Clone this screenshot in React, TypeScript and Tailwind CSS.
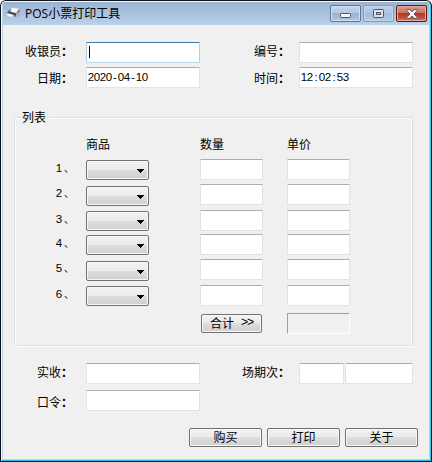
import type { ReactNode } from "react";

const ROWS = [
  { no: 1, height: "h-[25px]", drop: "mt-px" },
  { no: 2, height: "h-[26px]", drop: "mt-0.5" },
  { no: 3, height: "h-[24px]", drop: "mt-px" },
  { no: 4, height: "h-[25px]", drop: "mt-px" },
  { no: 5, height: "h-[26px]", drop: "mt-0.5" },
  { no: 6, height: "h-[28px]", drop: "mt-px" },
];

// half-width characters sit in 6px cells
function HalfWidth({ text }: { text: string }) {
  return (
    <span className="inline-flex font-['Liberation_Sans',sans-serif] text-[11.5px] leading-[12px]">
      {text.split("").map((ch, i) => (
        <span key={i} className="flex w-1.5 justify-center">
          {ch}
        </span>
      ))}
    </span>
  );
}

function Field({ width, value = "", focused = false }: { width: string; value?: string; focused?: boolean }) {
  const border = focused
    ? "border-[#b5cfe7] border-t-[#3d7bad] border-b-[#b7d9ed]"
    : "border-[#e2e3ea] border-t-[#abadb3]";
  return (
    <div className={`flex h-[21px] shrink-0 items-start rounded-[1px] border bg-white pl-px pt-[3px] ${border} ${width}`}>
      {focused && <div className="ml-px h-3 w-px bg-black" />}
      {value && <HalfWidth text={value} />}
    </div>
  );
}

function Button({ width, children }: { width: string; children: ReactNode }) {
  return (
    <button
      className={`flex h-[19px] shrink-0 items-start justify-center whitespace-pre rounded-[2px] border border-[#707070] bg-[linear-gradient(#f2f2f2_0%,#ebebeb_49%,#dddddd_50%,#cfcfcf_100%)] pt-0.5 text-[12px] leading-[12px] shadow-[inset_0_0_0_1px_#f8f8f8] ${width}`}
    >
      {children}
    </button>
  );
}

function Combo() {
  return (
    <button className="flex h-5 w-[63px] items-start justify-end rounded-[2px] border border-[#707070] bg-[linear-gradient(#f2f2f2_0%,#ebebeb_49%,#dddddd_50%,#cfcfcf_100%)] pr-1 pt-2 shadow-[inset_0_0_0_1px_#f8f8f8]">
      <svg width="7" height="4" viewBox="0 0 7 4" shapeRendering="crispEdges">
        <path d="M0 0h7v1H0zM1 1h5v1H1zM2 2h3v1H2zM3 3h1v1H3z" />
      </svg>
    </button>
  );
}

function Label({ width, children }: { width: string; children: ReactNode }) {
  return (
    <div className={`shrink-0 whitespace-nowrap pt-[3px] leading-[12px] ${width}`}>
      {children}
      <span className="font-bold">：</span>
    </div>
  );
}

function TitleBar() {
  return (
    <div className="flex h-[23px] shrink-0 bg-[linear-gradient(#9ab3d0,#b9d1ea)]">
      <svg className="ml-[2px] mt-[4px] shrink-0" width="16" height="14" viewBox="0 0 16 14">
        <path d="M6.5 1.5 14 2.2 11.5 7 5 6z" fill="#f4f7fb" stroke="#a9b2bf" strokeWidth=".5" />
        <path d="M3 4.5 6 3l-.5 3.5 6 .8L13 4l2 .5v4L11 11 1.5 8z" fill="#77828e" />
        <path d="m3.5 5.5 7.5 2-.5 2L3 7.5z" fill="#343b43" />
        <path d="m11 8 4-2.5v3L11 11z" fill="#aeb7c1" />
        <path d="m0 8.5 3-1.3L9 9l-3 2.5z" fill="#f5f5f5" stroke="#989da5" strokeWidth=".4" />
      </svg>
      <div className="ml-1 mt-1 grow whitespace-nowrap font-['Open_Sans','Noto_Sans_CJK_SC',sans-serif] text-[12px] leading-[16px]">
        POS小票打印工具
      </div>
      <div className="mr-0.5 mt-[3px] flex h-[17px] gap-0.5">
        <button className="flex w-[31px] items-center justify-center rounded-[2px] border border-[#60758f] bg-[linear-gradient(#c3d4e8_0%,#b4c9e2_46%,#98b2d0_47%,#afc8e4_100%)] shadow-[inset_0_0_0_1px_#d4e1f1]">
          <svg width="11" height="5" viewBox="0 0 11 5" className="mt-1">
            <rect x=".5" y=".5" width="10" height="4" rx=".8" fill="#f5f5f5" stroke="#535666" />
          </svg>
        </button>
        <button className="flex w-[31px] items-center justify-center rounded-[2px] border border-[#829bb9] bg-[linear-gradient(#b9cee6_0%,#afc6e0_46%,#a3bdda_47%,#b3cbe6_100%)] shadow-[inset_0_0_0_1px_#c4d6eb]">
          <svg width="11" height="9" viewBox="0 0 11 9">
            <rect x=".5" y=".5" width="10" height="8" rx=".8" fill="#dce2ea" stroke="#535666" />
            <rect x="3.5" y="3.5" width="4" height="2" fill="#a9bfd9" stroke="#535666" />
          </svg>
        </button>
        <button className="flex w-[31px] items-center justify-center rounded-[2px] border border-[#54191a] bg-[linear-gradient(#dc9b90_0%,#cc7163_46%,#b33522_47%,#c75040_80%,#d7796a_100%)] shadow-[inset_0_0_0_1px_#e4a99f]">
          <svg width="12" height="10" viewBox="0 0 12 10">
            <path
              d="M.7.6h3.1L6 2.9 8.2.6h3.1v.8L8.1 5l3.2 3.6v.8H8.2L6 7.1 3.8 9.4H.7v-.8L3.9 5 .7 1.4z"
              fill="#f7f7f7"
              stroke="#535666"
              strokeWidth="1"
            />
          </svg>
        </button>
      </div>
    </div>
  );
}

export default function App() {
  return (
    <div className="h-[462px] w-[432px] rounded-t-[6px] bg-[#101317] p-px font-['Noto_Sans_CJK_SC',sans-serif] text-[12px] text-black">
      <div className="h-full rounded-t-[5px] border border-b-[#1fc4e8] border-l-[#f3f8fd] border-r-[#35c9ef] border-t-[#f3f8fd] bg-[#b9d1ea]">
        <div className="flex h-full flex-col overflow-hidden rounded-t-[4px] border-x border-b border-[#b9d1ea]">
          <TitleBar />

          <div className="flex grow flex-col bg-[#f0f0f0] pt-[17px]">
            <div className="flex pl-[22px]">
              <Label width="w-[61px]">收银员</Label>
              <Field width="w-[114px]" focused />
              <div className="w-[54px]" />
              <Label width="w-[45px]">编号</Label>
              <Field width="w-[114px]" />
            </div>
            <div className="mt-1 flex pl-[34px]">
              <Label width="w-[49px] mt-0.5">日期</Label>
              <Field width="w-[114px]" value="2020-04-10" />
              <div className="w-[54px]" />
              <Label width="w-[45px] mt-0.5">时间</Label>
              <Field width="w-[114px]" value="12:02:53" />
            </div>

            <fieldset className="ml-[11px] mt-[23px] h-[236px] w-[399px]">
              <div className="flex h-3 items-center leading-[12px]">
                <div className="mt-1 h-1 w-[7px] rounded-tl-[2px] border-l border-t border-[#d5dfe5] shadow-[inset_1px_1px_0_white]" />
                <div className="w-7 pl-px">列表</div>
                <div className="mt-1 h-1 grow rounded-tr-[2px] border-r border-t border-[#d5dfe5] shadow-[inset_-1px_1px_0_white]" />
              </div>
              <div className="-mt-1 h-[227px] rounded-b-[2px] border-x border-b border-[#d5dfe5] pt-[19px] shadow-[inset_1px_0_0_white,inset_-1px_0_0_white,0_1px_0_white]">
                <div className="flex pl-[71px] leading-[12px]">
                  <div className="w-[114px]">商品</div>
                  <div className="w-[87px]">数量</div>
                  <div>单价</div>
                </div>
                <div className="mt-[9px]">
                  {ROWS.map((row) => (
                    <div key={row.no} className={`flex items-start pl-[41px] ${row.height}`}>
                      <div className="flex w-[30px] pt-[3px] leading-[12px]">
                        <HalfWidth text={String(row.no)} />
                        <span className="pl-0.5 text-[10px]">、</span>
                      </div>
                      <div className={`w-[114px] ${row.drop}`}>
                        <Combo />
                      </div>
                      <Field width="w-[63px]" />
                      <div className="w-6" />
                      <Field width="w-[63px]" />
                    </div>
                  ))}
                </div>
                <div className="flex pl-[186px]">
                  <div className="w-[86px] pt-px">
                    <Button width="w-[61px]">
                      合计
                      <span className="pl-[7px] font-['Liberation_Mono',monospace] tracking-[-1.2px]">{">>"}</span>
                    </Button>
                  </div>
                  <div className="h-[21px] w-[63px] border border-b-white border-l-[#a0a0a0] border-r-white border-t-[#a0a0a0]" />
                </div>
              </div>
            </fieldset>

            <div className="mt-4 flex pl-[34px]">
              <Label width="w-[49px]">实收</Label>
              <Field width="w-[114px]" />
              <div className="w-[42px]" />
              <Label width="w-[57px]">场期次</Label>
              <Field width="w-[45px]" />
              <div className="w-px" />
              <Field width="w-[68px]" />
            </div>
            <div className="mt-1.5 flex pl-[34px]">
              <Label width="w-[49px] mt-[3px]">口令</Label>
              <Field width="w-[114px]" />
            </div>
            <div className="mt-[17px] flex gap-[5px] pl-[186px]">
              <Button width="w-[73px]">购买</Button>
              <Button width="w-[73px]">打印</Button>
              <Button width="w-[73px]">关于</Button>
            </div>
          </div>
        </div>
      </div>
    </div>
  );
}
